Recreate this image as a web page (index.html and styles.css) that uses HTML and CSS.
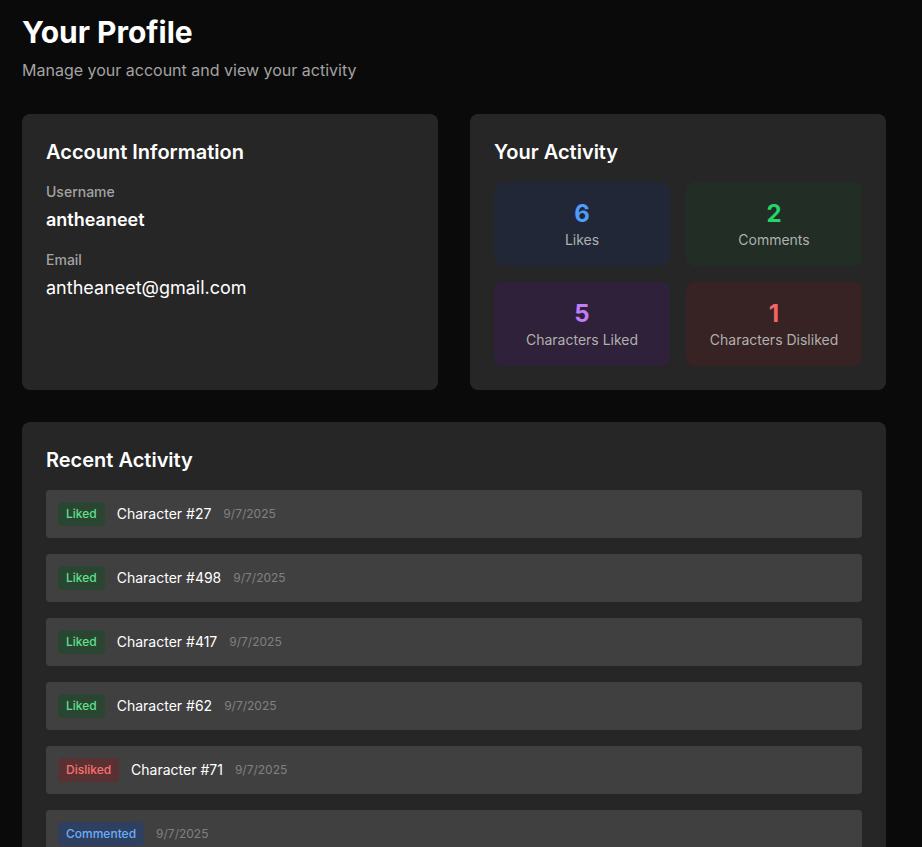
FILE: index.html
```html
<!DOCTYPE html>
<html lang="en">
<head>
<meta charset="utf-8">
<title>Your Profile</title>
<link rel="stylesheet" href="styles.css">
</head>
<body>
<main class="page">
  <header class="page-header">
    <h1 class="title">Your Profile</h1>
    <p class="subtitle">Manage your account and view your activity</p>
  </header>

  <section class="top-grid">
    <div class="card">
      <h2 class="card-title">Account Information</h2>
      <div class="field">
        <div class="field-label">Username</div>
        <div class="field-value strong">antheaneet</div>
      </div>
      <div class="field">
        <div class="field-label">Email</div>
        <div class="field-value">antheaneet@gmail.com</div>
      </div>
    </div>

    <div class="card">
      <h2 class="card-title">Your Activity</h2>
      <div class="stats">
        <div class="stat stat-blue"><div class="stat-num">6</div><div class="stat-label">Likes</div></div>
        <div class="stat stat-green"><div class="stat-num">2</div><div class="stat-label">Comments</div></div>
        <div class="stat stat-purple"><div class="stat-num">5</div><div class="stat-label">Characters Liked</div></div>
        <div class="stat stat-red"><div class="stat-num">1</div><div class="stat-label">Characters Disliked</div></div>
      </div>
    </div>
  </section>

  <section class="card recent">
    <h2 class="card-title">Recent Activity</h2>
    <ul class="activity-list">
      <li class="activity"><span class="badge badge-liked">Liked</span><span class="activity-name">Character #27</span><span class="activity-date">9/7/2025</span></li>
      <li class="activity"><span class="badge badge-liked">Liked</span><span class="activity-name">Character #498</span><span class="activity-date">9/7/2025</span></li>
      <li class="activity"><span class="badge badge-liked">Liked</span><span class="activity-name">Character #417</span><span class="activity-date">9/7/2025</span></li>
      <li class="activity"><span class="badge badge-liked">Liked</span><span class="activity-name">Character #62</span><span class="activity-date">9/7/2025</span></li>
      <li class="activity"><span class="badge badge-disliked">Disliked</span><span class="activity-name">Character #71</span><span class="activity-date">9/7/2025</span></li>
      <li class="activity"><span class="badge badge-commented">Commented</span><span class="activity-date">9/7/2025</span></li>
    </ul>
  </section>
</main>
</body>
</html>
```

FILE: styles.css
```css
* { box-sizing: border-box; }
html, body { margin: 0; padding: 0; }
body {
  background: #0a0a0a;
  color: #f5f5f5;
  font-family: Inter, "Noto Sans", "Liberation Sans", sans-serif;
}
.page {
  width: 864px;
  margin-left: 22px;
  padding-top: 14px;
  padding-bottom: 40px;
}
.page-header { margin-bottom: 32px; }
.title {
  margin: 0 0 8px;
  font-size: 30px;
  line-height: 36px;
  font-weight: 700;
  color: #ffffff;
}
.subtitle {
  margin: 0;
  font-size: 16px;
  line-height: 24px;
  color: #a3a3a3;
}
.top-grid {
  display: grid;
  grid-template-columns: 1fr 1fr;
  gap: 32px;
  margin-bottom: 32px;
}
.card {
  background: #262626;
  border-radius: 8px;
  padding: 24px;
}
.card-title {
  margin: 0 0 16px;
  font-size: 20px;
  line-height: 28px;
  font-weight: 600;
  color: #ffffff;
}
.field { margin-bottom: 16px; }
.field-label {
  font-size: 14px;
  line-height: 20px;
  font-weight: 500;
  color: #a3a3a3;
}
.field-value {
  margin-top: 4px;
  font-size: 18px;
  line-height: 28px;
  color: #ffffff;
}
.field-value.strong { font-weight: 600; }
.stats {
  display: grid;
  grid-template-columns: 1fr 1fr;
  gap: 16px;
}
.stat {
  border-radius: 8px;
  padding: 16px;
  text-align: center;
}
.stat-num {
  font-size: 24px;
  line-height: 32px;
  font-weight: 700;
}
.stat-label {
  font-size: 14px;
  line-height: 20px;
  color: #b0b0b0;
}
.stat-blue { background: #212736; }
.stat-blue .stat-num { color: #4f9cf9; }
.stat-green { background: #212d25; }
.stat-green .stat-num { color: #22d66a; }
.stat-purple { background: #2e2139; }
.stat-purple .stat-num { color: #c27cf8; }
.stat-red { background: #372323; }
.stat-red .stat-num { color: #f46565; }
.activity-list {
  list-style: none;
  margin: 0;
  padding: 0;
  display: flex;
  flex-direction: column;
  gap: 16px;
}
.activity {
  display: flex;
  align-items: center;
  gap: 12px;
  background: #404040;
  border-radius: 4px;
  padding: 12px;
}
.badge {
  font-size: 12px;
  line-height: 16px;
  font-weight: 500;
  padding: 4px 8px;
  border-radius: 4px;
}
.badge-liked { background: #2a4632; color: #5ee08c; }
.badge-disliked { background: #5a3132; color: #f87171; }
.badge-commented { background: #2f3f5f; color: #6aaefb; }
.activity-name {
  font-size: 14px;
  line-height: 20px;
  color: #ffffff;
}
.activity-date {
  font-size: 12px;
  line-height: 16px;
  color: #808080;
}
```
